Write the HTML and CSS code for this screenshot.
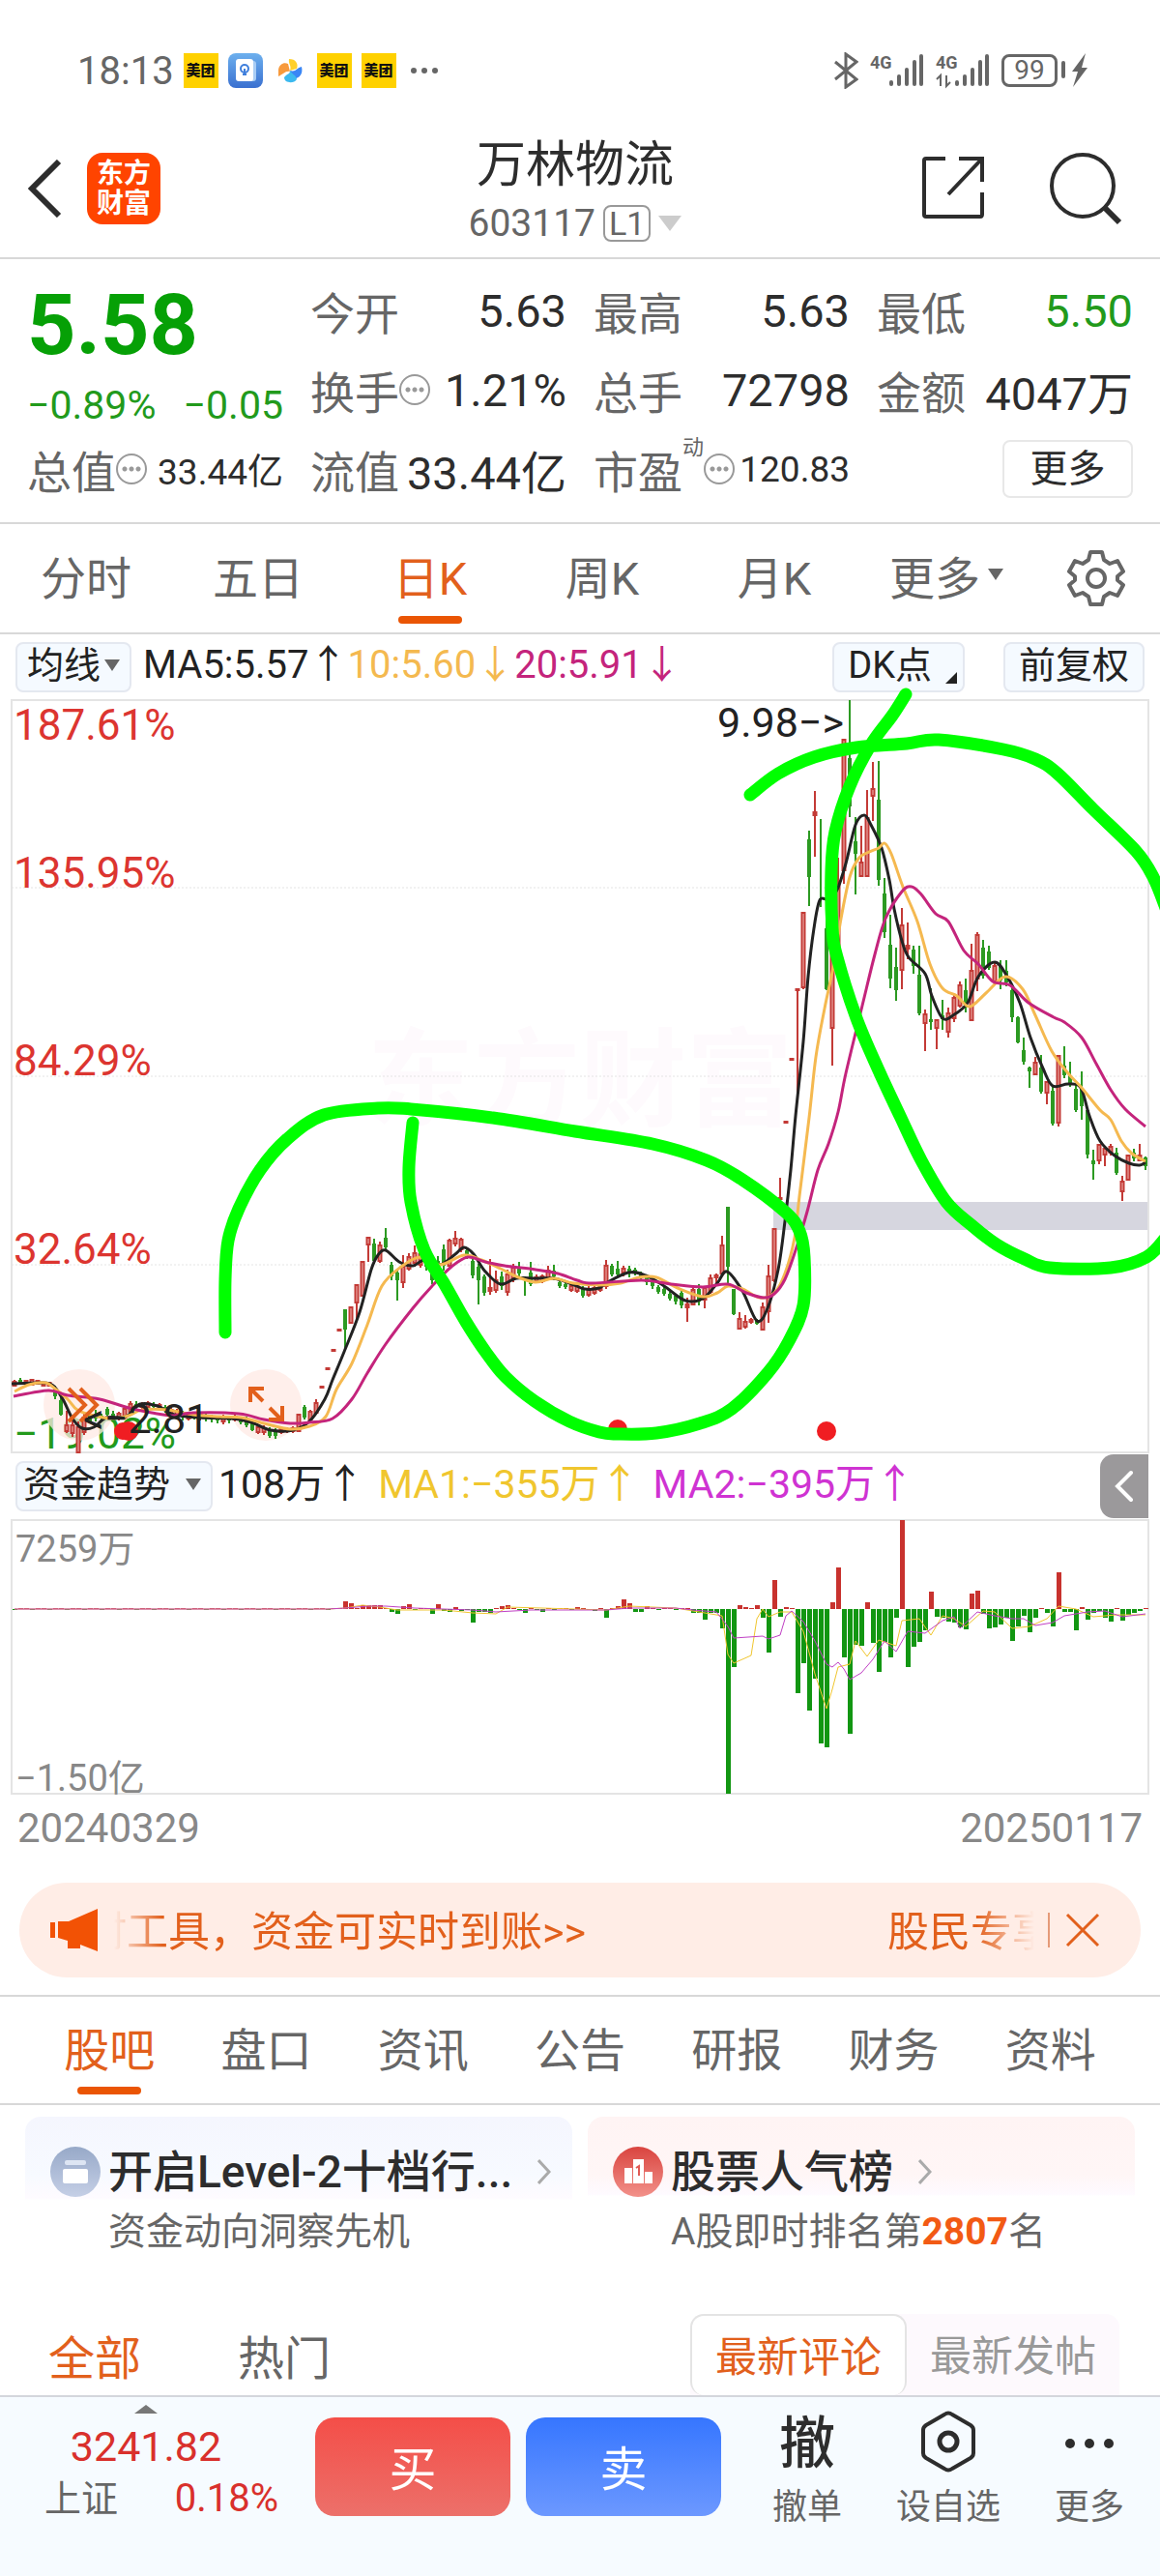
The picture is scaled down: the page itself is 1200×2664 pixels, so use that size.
FILE: index.html
```html
<!DOCTYPE html>
<html lang="zh-CN">
<head>
<meta charset="utf-8">
<meta name="viewport" content="width=device-width, initial-scale=1">
<title>万林物流 603117</title>
<link rel="stylesheet" href="styles.css">
</head>
<body>
<div class="page">

<div class="status">
  <div class="status-left">
    <span class="clock">18:13</span>
    <span class="app-mt">美团</span>
    <svg class="app-icon" viewBox="0 0 36 36"><defs><linearGradient id="doc" x2="0" y2="1"><stop stop-color="#6db0ee"/><stop offset="1" stop-color="#3a70d0"/></linearGradient></defs><rect width="36" height="36" rx="8" fill="url(#doc)"/><rect x="12" y="8" width="17" height="21" rx="3" fill="#a9cdf5"/><rect x="8" y="6" width="18" height="23" rx="3" fill="#fff"/><circle cx="17" cy="16" r="4" fill="none" stroke="#3f7fdc" stroke-width="2"/><path d="M15 22h4M17 16v6" stroke="#3f7fdc" stroke-width="2"/></svg>
    <svg class="app-icon" viewBox="0 0 36 36"><path d="M17 6c7 0 10 5 8 10l-7 2c2-5-2-7-1-12z" fill="#ffd02c"/><path d="M6 17c1-6 6-8 10-6l2 8c-5-1-7 3-12 5z" fill="#f79a3c"/><path d="M30 14c2 8-3 13-9 12l-3-8c6 2 7-3 12-4z" fill="#3a86f5"/><path d="M12 25c3-4 6-3 6-7 3 5 6 4 7 9-3 5-13 4-13-2z" fill="#3cb9ef"/></svg>
    <span class="app-mt">美团</span>
    <span class="app-mt">美团</span>
    <svg class="dots" viewBox="0 0 30 8" fill="#666"><circle cx="4" cy="4" r="3"/><circle cx="15" cy="4" r="3"/><circle cx="26" cy="4" r="3"/></svg>
  </div>
  <div class="status-right">
    <svg class="bt" viewBox="0 0 26 38" fill="none" stroke="#666" stroke-width="3"><path d="M2 10l22 18-11 8V2l11 8L2 28"/></svg>
    <svg class="signal" viewBox="0 0 56 38"><g fill="#666"><rect x="20" y="29" width="4" height="6" rx="2"/><rect x="28" y="23" width="4" height="12" rx="2"/><rect x="36" y="16" width="4" height="19" rx="2"/><rect x="44" y="8" width="4" height="27" rx="2"/><rect x="51" y="2" width="4" height="33" rx="2"/></g><text x="0" y="17" class="net">4G</text></svg>
    <svg class="signal" viewBox="0 0 56 38"><g fill="#666"><rect x="20" y="29" width="4" height="6" rx="2"/><rect x="28" y="23" width="4" height="12" rx="2"/><rect x="36" y="16" width="4" height="19" rx="2"/><rect x="44" y="8" width="4" height="27" rx="2"/><rect x="51" y="2" width="4" height="33" rx="2"/></g><text x="0" y="17" class="net">4G</text><path d="M1 28l4-4v11M15 31l-4 4V24" fill="none" stroke="#666" stroke-width="2"/></svg>
    <span class="battery">99</span>
    <svg class="bolt" viewBox="0 0 28 38"><rect x="0" y="9" width="4" height="18" rx="2" fill="#666"/><path d="M25 1L11 20h6l-5 16 15-20h-6z" fill="#666"/></svg>
  </div>
</div>

<header class="header">
  <div class="header-side">
    <button class="icon-btn" aria-label="返回"><svg class="back" viewBox="0 0 36 60" fill="none" stroke="#2d2d2d" stroke-width="6"><path d="M33 2L5 30l28 28"/></svg></button>
    <a class="logo" href="#">东方<br>财富</a>
  </div>
  <div class="header-title">
    <h1>万林物流</h1>
    <button class="code">603117<span class="level">L1</span><span class="tri tri-light"></span></button>
  </div>
  <div class="header-side header-end">
    <button class="icon-btn" aria-label="分享"><svg class="share" viewBox="0 0 70 70" fill="none" stroke="#2d2d2d" stroke-width="4"><path d="M26 4H6q-2 0-2 2v56q0 2 2 2h56q2 0 2-2V39"/><path d="M40 4h24v24M64 4L29 41"/></svg></button>
    <button class="icon-btn" aria-label="搜索"><svg class="search" viewBox="0 0 78 78" fill="none" stroke="#2d2d2d" stroke-width="4"><circle cx="36" cy="36" r="32"/><path d="M59 59l15 15" stroke-width="6"/></svg></button>
  </div>
</header>

<section class="quote">
  <div class="price">
    <strong>5.58</strong>
    <div class="change"><span>−0.89%</span><span>−0.05</span></div>
  </div>
  <div class="cell"><span>今开</span><b>5.63</b></div>
  <div class="cell"><span>最高</span><b>5.63</b></div>
  <div class="cell"><span>最低</span><b class="down">5.50</b></div>
  <div class="cell"><span>换手<i class="tip"></i></span><b>1.21%</b></div>
  <div class="cell"><span>总手</span><b>72798</b></div>
  <div class="cell"><span>金额</span><b>4047万</b></div>
  <div class="cell"><span>总值<i class="tip"></i></span><b class="small">33.44亿</b></div>
  <div class="cell"><span>流值</span><b>33.44亿</b></div>
  <div class="cell"><span>市盈<sup>动</sup><i class="tip"></i></span><b class="small">120.83</b></div>
  <div class="cell cell-end"><button class="more-btn">更多</button></div>
</section>

<nav class="tabs period">
  <a href="#">分时</a>
  <a href="#">五日</a>
  <a href="#" class="active">日K</a>
  <a href="#">周K</a>
  <a href="#">月K</a>
  <a href="#">更多<span class="tri tri-small"></span></a>
  <button class="icon-btn" aria-label="设置"><svg class="gear" viewBox="0 0 60 60" fill="none" stroke="#666" stroke-width="4" stroke-linejoin="round"><path d="M24 3h12l2 8 6 4 8-3 6 11-6 5v4l6 5-6 11-8-3-6 4-2 8H24l-2-8-6-4-8 3-6-11 6-5v-4l-6-5 6-11 8 3 6-4z"/><circle cx="30" cy="30" r="9"/></svg></button>
</nav>

<div class="indicator">
  <button class="chip">均线<span class="tri tri-small"></span></button>
  <span>MA5:5.57↑</span>
  <span class="ma10">10:5.60↓</span>
  <span class="ma20">20:5.91↓</span>
  <button class="chip push dk">DK点<svg class="corner" viewBox="0 0 12 12"><path d="M12 0v12H0z" fill="#222"/></svg></button>
  <button class="chip">前复权</button>
</div>

<svg class="chart" viewBox="0 0 1200 778" role="img" aria-label="日K线图">
  <text x="380" y="432" class="watermark">东方财富</text>
  <g class="frame">
    <rect x="12" y="0" width="1176" height="778"/>
    <path class="grid" d="M12 194h1176M12 389h1176M12 584h1176"/>
  </g>
  <g class="axis">
    <text x="14" y="41">187.61%</text>
    <text x="14" y="194">135.95%</text>
    <text x="14" y="388">84.29%</text>
    <text x="14" y="583">32.64%</text>
    <text x="14" y="774" class="neg">−19.02%</text>
  </g>
  <rect x="800" y="519" width="387" height="29" fill="#d6d6df"/>
  <g fill="#ffe9e4" fill-opacity=".75"><circle cx="82" cy="729" r="37"/><circle cx="275" cy="729" r="37"/></g>
  <g id="candles"></g>
  <g id="averages" class="lines"></g>
  <g fill="none" stroke="#e2601c" stroke-width="4"><path d="M71 712l17 17-17 17M83 712l17 17-17 17"/><path d="M259 726v-14h14M260 713l12 12M279 732l12 12M292 730v14h-14"/></g>
  <g fill="#f01d22"><circle cx="127" cy="756" r="9"/><circle cx="133" cy="756" r="10"/><circle cx="639" cy="754" r="10"/><circle cx="855" cy="756" r="10"/></g>
  <g class="marks">
    <text x="742" y="38">9.98−&gt;</text>
    <text x="86" y="758">&lt;−2.81</text>
  </g>
  <g id="pen" class="pen"></g>
</svg>

<div class="indicator fund-head">
  <button class="chip chip-wide">资金趋势<span class="tri tri-small"></span></button>
  <span>108万↑</span>
  <span class="fund1">MA1:−355万↑</span>
  <span class="fund2">MA2:−395万↑</span>
  <button class="collapse push" aria-label="展开"><svg viewBox="0 0 20 34" fill="none" stroke="#fff" stroke-width="4" stroke-linecap="round"><path d="M17 3L3 17l14 14"/></svg></button>
</div>

<svg class="chart" viewBox="0 0 1200 284" role="img" aria-label="资金趋势图">
  <rect x="12" y="0" width="1176" height="283" class="frame"/>
  <g id="flow"></g>
  <g id="flowLines" class="thin-lines"></g>
  <g class="scale">
    <text x="16" y="43">7259万</text>
    <text x="16" y="280">−1.50亿</text>
  </g>
</svg>

<div class="dates"><time>20240329</time><time>20250117</time></div>

<div class="notice">
  <svg class="horn" viewBox="0 0 50 44" fill="#f25205"><rect x="0" y="14" width="5" height="16"/><path d="M8 13h11L49 0v44L31 37v4H18v-8L8 30z"/></svg>
  <a class="marquee" href="#"><span>时工具，资金可实时到账&gt;&gt;</span><span>股民专享</span></a>
  <button class="icon-btn close" aria-label="关闭"><svg viewBox="0 0 36 36" fill="none" stroke="#e2601c" stroke-width="3"><path d="M2 2l32 32M34 2L2 34"/></svg></button>
</div>

<nav class="tabs info">
  <a href="#" class="active">股吧</a>
  <a href="#">盘口</a>
  <a href="#">资讯</a>
  <a href="#">公告</a>
  <a href="#">研报</a>
  <a href="#">财务</a>
  <a href="#">资料</a>
</nav>

<section class="cards">
  <a class="card" href="#">
    <svg class="card-icon" viewBox="0 0 52 52"><defs><linearGradient id="blue" x2="0" y2="1"><stop stop-color="#97a9c8"/><stop offset="1" stop-color="#c5cfe6"/></linearGradient></defs><circle cx="26" cy="26" r="26" fill="url(#blue)"/><rect x="15" y="14" width="22" height="5" rx="2" fill="#dde5f3"/><rect x="13" y="23" width="26" height="15" rx="2" fill="#fff"/></svg>
    <h2>开启Level-2十档行...</h2>
    <svg class="arrow" viewBox="0 0 14 26" fill="none" stroke="#aaa" stroke-width="3"><path d="M1 1l11 12L1 25"/></svg>
    <p>资金动向洞察先机</p>
  </a>
  <a class="card card-red" href="#">
    <svg class="card-icon" viewBox="0 0 52 52"><defs><linearGradient id="red" x2="0" y2="1"><stop stop-color="#d9443f"/><stop offset="1" stop-color="#f2918a"/></linearGradient></defs><circle cx="26" cy="26" r="26" fill="url(#red)"/><path d="M12 38V22h8v16zM21 38V13h11v25zM33 38V26h8v12z" fill="#fff"/><path d="M24 22l3-2v10" fill="none" stroke="#e05a55" stroke-width="2"/></svg>
    <h2>股票人气榜</h2>
    <svg class="arrow" viewBox="0 0 14 26" fill="none" stroke="#aaa" stroke-width="3"><path d="M1 1l11 12L1 25"/></svg>
    <p>A股即时排名第<em>2807</em>名</p>
  </a>
</section>

<div class="filter">
  <a href="#" class="active">全部</a>
  <a href="#">热门</a>
  <div class="switch">
    <button class="on">最新评论</button>
    <button>最新发帖</button>
  </div>
</div>

<footer class="bottom">
  <a class="index" href="#">
    <span class="tri tri-up"></span>
    <b>3241.82</b>
    <span class="index-row"><span>上证</span><b>0.18%</b></span>
  </a>
  <button class="trade buy">买</button>
  <button class="trade sell">卖</button>
  <button class="tool"><span class="glyph">撤</span><span>撤单</span></button>
  <button class="tool"><svg viewBox="0 0 58 64" fill="none" stroke="#2d2d2d" stroke-width="4" stroke-linejoin="round"><path d="M25 4q4-3 8 0l19 11q3 2 3 5v24q0 3-3 5L33 60q-4 3-8 0L6 49q-3-2-3-5V20q0-3 3-5z"/><circle cx="29" cy="32" r="9" stroke-width="5"/></svg><span>设自选</span></button>
  <button class="tool"><svg viewBox="0 0 58 64" fill="#2d2d2d"><circle cx="9" cy="34" r="5"/><circle cx="29" cy="34" r="5"/><circle cx="49" cy="34" r="5"/></svg><span>更多</span></button>
</footer>

</div>
<script src="chart.js"></script>
</body>
</html>
```

FILE: styles.css
```css
* {
  box-sizing: border-box;
}
body {
  margin: 0;
  background: #fff;
  color: #2d2d2d;
  font-family: Roboto, "Noto Sans CJK SC", sans-serif;
  font-size: 40px;
}
a {
  color: inherit;
  text-decoration: none;
}
button {
  margin: 0;
  padding: 0;
  border: 0;
  background: none;
  color: inherit;
  font: inherit;
}
svg {
  display: block;
}
h1, h2, p {
  margin: 0;
  font-weight: 400;
}
b, i, em {
  font-style: normal;
  font-weight: 400;
}
.page {
  overflow: hidden;
}
.icon-btn {
  display: flex;
  align-items: center;
  justify-content: center;
}
.tri {
  display: inline-block;
  border: 12px solid transparent;
  border-top: 16px solid #666;
  border-bottom: 0;
}
.tri-light {
  border-top-color: #ccc;
}
.tri-small {
  border-width: 12px 8px 0;
}
.tri-up {
  border-width: 0 12px 9px;
  border-bottom: 9px solid #777;
}

/* status bar */
.status {
  display: flex;
  align-items: center;
  justify-content: space-between;
  height: 128px;
  padding: 18px 74px 0 80px;
  color: #666;
}
.status-left, .status-right {
  display: flex;
  align-items: center;
  gap: 10px;
}
.status-right {
  gap: 12px;
}
.app-mt {
  width: 36px;
  height: 36px;
  background: #ffd100;
  color: #111;
  font-size: 15px;
  font-weight: 900;
  line-height: 36px;
  text-align: center;
}
.app-icon {
  width: 36px;
  height: 36px;
}
.dots {
  width: 30px;
  margin-left: 4px;
}
.bt {
  width: 26px;
  height: 38px;
}
.signal {
  width: 56px;
  height: 38px;
}
.net {
  fill: #666;
  font-size: 18px;
  font-weight: 700;
}
.battery {
  width: 58px;
  height: 34px;
  border: 3px solid #666;
  border-radius: 8px;
  font-size: 28px;
  line-height: 28px;
  text-align: center;
}
.bolt {
  width: 28px;
  height: 38px;
  margin-left: -8px;
}

/* title */
.header {
  display: grid;
  grid-template-columns: 1fr auto 1fr;
  align-items: center;
  height: 140px;
  padding: 0 38px 8px 28px;
  border-bottom: 2px solid #d8d8d8;
}
.header-side {
  display: flex;
  align-items: center;
  gap: 26px;
  padding-top: 4px;
}
.header-end {
  justify-content: flex-end;
  gap: 62px;
}
.header-title {
  padding-top: 4px;
  text-align: center;
}
.header h1 {
  font-size: 51px;
  line-height: 72px;
}
.code {
  display: flex;
  align-items: center;
  justify-content: center;
  gap: 8px;
  color: #666;
  font-size: 39px;
  line-height: 48px;
}
.level {
  padding: 0 4px;
  border: 2px solid #999;
  border-radius: 8px;
  font-size: 34px;
  line-height: 34px;
}
.back {
  width: 36px;
  height: 60px;
}
.logo {
  width: 76px;
  height: 74px;
  padding-top: 6px;
  border-radius: 16px;
  background: #ff4400;
  color: #fff;
  font-size: 28px;
  font-weight: 700;
  line-height: 31px;
  text-align: center;
}
.share {
  width: 70px;
  height: 70px;
}
.search {
  width: 78px;
  height: 78px;
}

/* quote */
.quote {
  display: grid;
  grid-template-columns: repeat(4, 1fr);
  grid-auto-rows: 82px;
  column-gap: 28px;
  padding: 12px 28px 14px;
  border-bottom: 2px solid #d8d8d8;
}
.price {
  grid-row: span 2;
  color: #06a006;
}
.price strong {
  display: block;
  font-size: 88px;
  line-height: 112px;
}
.change {
  display: flex;
  justify-content: space-between;
  color: #229a1c;
  font-size: 41px;
  line-height: 54px;
}
.cell {
  display: flex;
  align-items: center;
  justify-content: space-between;
  font-size: 47px;
  white-space: nowrap;
}
.cell span {
  display: flex;
  align-items: center;
  color: #666;
  font-size: 46px;
}
.cell b.small {
  font-size: 37px;
}
.cell b.down {
  color: #229a1c;
}
.cell sup {
  align-self: flex-start;
  font-size: 22px;
  line-height: 22px;
}
.cell-end {
  justify-content: flex-end;
}
.tip {
  width: 32px;
  height: 32px;
  border: 2px solid #999;
  border-radius: 50%;
  background:
    radial-gradient(circle at 7px 14px, #999 2px, transparent 3px),
    radial-gradient(circle at 14px 14px, #999 2px, transparent 3px),
    radial-gradient(circle at 21px 14px, #999 2px, transparent 3px);
}
.more-btn {
  width: 135px;
  height: 60px;
  border: 2px solid #e8e8e8;
  border-radius: 8px;
  font-size: 39px;
  line-height: 54px;
}

/* tabs */
.tabs {
  display: grid;
  height: 114px;
  border-bottom: 2px solid #d8d8d8;
  color: #666;
  font-size: 47px;
}
.period {
  grid-template-columns: repeat(6, 1fr) 132px;
}
.info {
  grid-template-columns: repeat(7, 1fr);
  padding: 0 32px;
}
.tabs a {
  position: relative;
  display: flex;
  align-items: center;
  justify-content: center;
  gap: 8px;
  padding-bottom: 8px;
}
.tabs .active, .filter .active {
  color: #e2601c;
}
.tabs .active::after {
  content: "";
  position: absolute;
  bottom: 9px;
  width: 66px;
  height: 8px;
  border-radius: 4px;
  background: #ea5504;
}
.gear {
  width: 60px;
  height: 60px;
}

/* indicator rows */
.indicator {
  display: flex;
  align-items: center;
  height: 68px;
  padding: 0 16px;
  color: #222;
  line-height: 52px;
  white-space: nowrap;
}
.indicator > span {
  padding-bottom: 4px;
}
.indicator .ma10 {
  color: #f4b94f;
}
.indicator .ma20 {
  color: #c4247c;
}
.fund-head > span {
  margin-right: 14px;
  font-size: 41px;
}
.indicator .fund1 {
  color: #f0c62e;
}
.indicator .fund2 {
  color: #cf33d2;
}
.chip {
  display: flex;
  align-items: center;
  gap: 4px;
  height: 52px;
  margin-right: 12px;
  padding: 0 10px 4px;
  border: 2px solid #e4e8f0;
  border-radius: 8px;
  background: #f5faff;
  font-size: 38px;
}
.chip:last-child {
  margin-right: 0;
  padding: 0 14px 4px;
}
.push {
  margin-left: auto;
}
.dk {
  gap: 14px;
  margin-right: 40px;
  padding: 0 6px 4px 14px;
}
.corner {
  width: 12px;
  height: 12px;
  margin-top: 26px;
}
.chip-wide {
  gap: 16px;
  margin-right: 6px;
  padding-left: 6px;
}
.fund-head {
  height: 70px;
  padding-right: 12px;
}
.collapse {
  display: flex;
  align-items: center;
  justify-content: center;
  width: 50px;
  height: 66px;
  border-radius: 14px 0 0 14px;
  background: #9b999b;
}
.collapse svg {
  width: 20px;
  height: 34px;
}

/* charts */
.chart {
  width: 100%;
  height: auto;
  overflow: visible;
}
.frame {
  fill: none;
  stroke: #e4e4e4;
  stroke-width: 2;
}
.grid {
  stroke-dasharray: 2 2;
  stroke-width: 1;
}
.watermark {
  fill: #fefafd;
  font-size: 110px;
  font-weight: 700;
}
.axis {
  fill: #dc3530;
  font-size: 44px;
}
.axis .neg {
  fill: #229a1c;
}
.marks {
  fill: #222;
  font-size: 43px;
}
.scale {
  fill: #888;
  font-size: 38px;
}
.lines {
  fill: none;
  stroke-width: 3;
}
.thin-lines {
  fill: none;
  stroke-width: 1;
}
.pen {
  fill: none;
  stroke: #00ff00;
  stroke-width: 13;
  stroke-linecap: round;
  stroke-linejoin: round;
}
.dates {
  display: flex;
  justify-content: space-between;
  padding: 8px 18px 30px;
  color: #888;
  font-size: 42px;
  line-height: 53px;
}

/* notice */
.notice {
  display: flex;
  align-items: center;
  height: 98px;
  margin: 0 20px 18px;
  padding: 0 42px 0 32px;
  border-radius: 49px;
  background: #ffede6;
  color: #e2601c;
  font-size: 43px;
}
.horn {
  width: 50px;
  height: 44px;
}
.marquee {
  display: flex;
  flex: 1;
  justify-content: space-between;
  min-width: 0;
  margin: 0 14px 0 16px;
  padding-bottom: 4px;
  overflow: hidden;
  white-space: nowrap;
  -webkit-mask: linear-gradient(to right, transparent, #000 50px, #000 calc(100% - 60px), transparent);
  mask: linear-gradient(to right, transparent, #000 50px, #000 calc(100% - 60px), transparent);
}
.marquee span:first-child {
  margin-left: -30px;
}
.marquee span:last-child {
  margin-right: -20px;
}
.close {
  padding-left: 16px;
  border-left: 2px solid #e59a78;
}
.close svg {
  width: 36px;
  height: 36px;
}
.info {
  border-top: 2px solid #d8d8d8;
}

/* cards */
.cards {
  display: grid;
  grid-template-columns: 1fr 1fr;
  gap: 16px;
  padding: 12px 26px 0;
}
.card {
  display: grid;
  grid-template-columns: 52px auto 1fr;
  column-gap: 8px;
  align-items: center;
  padding: 24px 18px 0 26px;
  border-radius: 16px 16px 0 0;
  background: linear-gradient(#f5f6fe, #f7faff 60px, #fefbff 84px, #fff 86px);
}
.card-red {
  background: linear-gradient(#fff4f4, #fff6f6 60px, #fefaff 80px, #fff 82px);
}
.card-icon {
  width: 52px;
  height: 52px;
}
.card h2 {
  font-size: 46px;
  font-weight: 500;
  line-height: 66px;
  white-space: nowrap;
}
.arrow {
  width: 14px;
  height: 26px;
  margin-left: 18px;
}
.card p {
  grid-column: 2 / 4;
  color: #666;
  font-size: 39px;
  line-height: 58px;
}
.card em {
  color: #f25a14;
  font-weight: 700;
}

/* filter */
.filter {
  display: flex;
  align-items: center;
  gap: 100px;
  height: 84px;
  margin-top: 56px;
  padding: 0 42px 0 50px;
  color: #666;
  font-size: 48px;
}
.switch {
  display: flex;
  height: 84px;
  margin-left: auto;
  border-radius: 14px 14px 0 0;
  background: #fdf9fd;
  color: #999;
  font-size: 43px;
}
.switch button {
  padding: 0 24px 4px;
}
.switch .on {
  border: 2px solid #e4e4e4;
  border-bottom: 0;
  border-radius: 14px;
  background: #fff;
  color: #e2601c;
}

/* bottom bar */
.bottom {
  display: flex;
  align-items: flex-start;
  padding: 8px 0 62px 46px;
  border-top: 2px solid #d4d6dc;
  background: #f6fbff;
}
.index {
  display: flex;
  flex-direction: column;
  align-items: center;
  width: 210px;
  margin-right: 70px;
}
.index b {
  color: #d9302c;
  font-size: 43px;
  line-height: 68px;
}
.index-row {
  display: flex;
  align-items: center;
  align-self: flex-start;
  justify-content: space-between;
  width: 242px;
  color: #666;
  font-size: 38px;
  line-height: 40px;
}
.index-row b {
  font-size: 40px;
  line-height: 40px;
}
.trade {
  flex: 1;
  height: 102px;
  margin: 13px 16px 0 0;
  padding-bottom: 4px;
  border-radius: 20px;
  color: #fff;
  font-size: 49px;
}
.buy {
  background: linear-gradient(#f44e48, #ec706a);
}
.sell {
  background: linear-gradient(#3676ff, #6c98ff);
}
.tool {
  display: flex;
  flex-direction: column;
  align-items: center;
  width: 146px;
  color: #666;
  font-size: 36px;
  line-height: 52px;
}
.tool svg {
  width: 58px;
  height: 64px;
  margin: 6px 0;
}
.tool span:last-child {
  padding-top: 4px;
}
.glyph {
  height: 76px;
  color: #2d2d2d;
  font-size: 58px;
  font-weight: 500;
  line-height: 80px;
}
```

FILE: chart.js
```js
var SVG = 'http://www.w3.org/2000/svg';
var STEP = 6;
var RED = '#c33a36';
var GREEN = '#2c9a22';

function add(parent, name, attrs) {
  var el = document.createElementNS(SVG, name);
  for (var key in attrs) {
    el.setAttribute(key, attrs[key]);
  }
  document.getElementById(parent).appendChild(el);
}

function xOf(i) {
  return 15 + STEP * i;
}

// Curve through all the points of a flat x, y list.
function smooth(list) {
  var p = [];
  for (var i = 0; i < list.length; i += 2) {
    p.push([list[i], list[i + 1]]);
  }
  var d = 'M' + p[0];
  for (i = 0; i < p.length - 1; i++) {
    var a = p[i - 1] || p[i], b = p[i], c = p[i + 1], e = p[i + 2] || c;
    d += 'C' + [b[0] + (c[0] - a[0]) / 6, b[1] + (c[1] - a[1]) / 6,
                c[0] - (e[0] - b[0]) / 6, c[1] - (e[1] - b[1]) / 6, c[0], c[1]];
  }
  return d;
}

// index, colour, high, body top, body bottom, low
var candles = [
  [0,'r',703,705,709,710],[1,'g',701,703,707,708],[2,'r',703,704,707,708],[3,'r',702,703,708,709],[4,'r',703,704,707,708],[5,'r',705,706,709,710],
  [6,'r',705,706,709,710],[7,'g',709,712,720,723],[8,'g',718,724,739,740],[9,'r',735,750,756,758],[10,'r',744,750,758,762],[11,'r',746,752,778,778],
  [12,'r',738,742,757,760],[13,'g',737,740,746,748],[14,'g',734,738,743,746],[15,'g',738,740,743,745],[16,'g',731,733,739,740],[17,'g',735,738,742,744],
  [18,'r',736,738,743,745],[19,'r',730,733,742,744],[20,'r',725,728,736,738],[21,'g',725,728,731,734],[22,'r',726,728,731,734],[23,'r',725,727,731,733],
  [24,'g',726,728,731,734],[25,'r',727,729,733,735],[26,'g',729,731,735,737],[27,'r',731,734,738,741],[28,'r',733,736,742,744],[29,'g',735,737,742,745],
  [30,'r',737,739,743,745],[31,'g',738,740,743,744],[32,'r',736,739,742,745],[33,'g',738,740,743,746],[34,'g',739,741,744,747],[35,'g',741,743,745,748],
  [36,'r',739,742,746,749],[37,'g',741,742,745,748],[38,'r',738,741,744,746],[39,'g',742,743,747,749],[40,'g',741,744,750,752],[41,'g',746,748,755,756],
  [42,'r',749,752,757,759],[43,'r',750,753,757,760],[44,'g',752,755,761,763],[45,'g',753,757,761,764],[46,'r',752,754,757,759],[47,'r',752,754,756,758],
  [48,'r',751,753,756,758],[49,'r',738,739,756,757],[50,'g',729,731,742,744],[51,'r',734,736,744,745],[52,'r',723,727,737,739],[53,'r',710,710,711,711],
  [54,'r',691,691,692,692],[55,'r',672,672,673,673],[56,'r',651,651,652,652],[57,'g',630,630,651,673],[58,'r',628,628,644,645],[59,'r',605,605,623,641],
  [60,'r',581,581,616,617],[61,'r',556,556,563,581],[62,'g',557,562,580,583],[63,'r',560,564,580,582],[64,'g',546,556,566,568],[65,'g',581,584,596,600],
  [66,'g',588,592,600,621],[67,'r',574,586,602,608],[68,'r',572,576,588,590],[69,'r',564,572,582,586],[70,'r',568,573,584,587],[71,'g',570,575,586,590],
  [72,'g',576,582,600,604],[73,'g',575,580,590,594],[74,'g',563,568,585,590],[75,'r',557,559,585,588],[76,'r',549,557,562,565],[77,'r',556,558,568,571],
  [78,'g',566,569,576,578],[79,'g',576,580,595,598],[80,'g',583,586,600,625],[81,'g',594,596,613,616],[82,'r',578,608,611,615],[83,'r',590,600,610,613],
  [84,'g',591,596,606,610],[85,'r',589,594,612,616],[86,'r',583,587,598,602],[87,'g',581,588,593,596],[88,'g',596,598,600,616],[89,'g',581,592,604,606],
  [90,'r',594,597,601,603],[91,'r',594,596,601,603],[92,'r',585,590,598,600],[93,'g',584,590,596,600],[94,'g',599,602,606,608],[95,'g',602,604,607,609],
  [96,'r',604,606,610,612],[97,'r',603,606,611,613],[98,'g',606,608,616,618],[99,'r',606,610,615,617],[100,'r',604,608,613,615],[101,'r',602,605,610,612],
  [102,'r',579,585,606,609],[103,'g',583,585,594,596],[104,'g',580,588,594,597],[105,'r',585,588,592,596],[106,'g',585,588,593,597],[107,'g',587,589,592,595],
  [108,'g',591,593,596,599],[109,'g',595,597,602,605],[110,'g',599,602,606,609],[111,'g',605,607,612,614],[112,'g',607,609,614,616],[113,'g',612,614,619,621],
  [114,'g',614,616,622,625],[115,'g',611,613,626,629],[116,'r',618,625,628,643],[117,'r',606,610,625,626],[118,'g',604,609,622,626],[119,'r',606,608,620,629],
  [120,'r',594,598,612,614],[121,'r',593,595,597,603],[122,'r',554,564,593,594],[123,'g',524,524,586,606],[124,'g',609,609,635,636],[125,'r',633,640,650,651],
  [126,'r',636,643,648,650],[127,'r',639,641,643,645],[128,'g',640,641,645,646],[129,'r',623,628,651,652],[130,'r',584,596,632,644],[131,'r',547,547,600,602],
  [132,'r',494,515,516,516],[133,'r',436,436,437,437],[134,'r',371,371,372,372],[135,'r',299,299,300,412],[136,'r',220,220,297,299],[137,'g',135,144,183,213],
  [138,'r',94,116,119,162],[139,'g',123,205,206,214],[140,'g',217,236,299,300],[141,'r',220,262,339,378],[142,'r',163,190,280,287],[143,'r',40,41,176,190],
  [144,'g',0,60,110,121],[145,'g',121,146,159,201],[146,'r',130,168,182,183],[147,'r',93,122,182,183],[148,'r',64,92,99,125],[149,'g',63,103,186,192],
  [150,'g',184,200,240,246],[151,'g',222,253,288,298],[152,'g',256,276,300,311],[153,'r',215,233,279,299],[154,'r',230,254,257,268],[155,'g',254,258,275,283],
  [156,'g',254,284,324,326],[157,'r',320,325,334,363],[158,'g',298,330,333,341],[159,'r',330,331,339,361],[160,'g',310,326,330,341],[161,'r',318,324,343,349],
  [162,'r',304,308,329,333],[163,'r',291,295,316,318],[164,'g',288,300,318,323],[165,'r',252,280,331,332],[166,'r',240,243,288,301],[167,'g',248,256,285,288],
  [168,'g',254,260,277,279],[169,'r',271,275,291,295],[170,'g',269,275,290,299],[171,'g',269,280,292,296],[172,'g',296,300,328,333],[173,'g',327,328,354,355],
  [174,'g',349,362,374,377],[175,'g',379,380,384,401],[176,'r',369,375,387,388],[177,'g',367,380,405,407],[178,'r',394,395,406,418],[179,'g',398,404,438,440],
  [180,'r',367,368,437,441],[181,'g',358,378,388,391],[182,'g',374,388,398,400],[183,'g',397,402,424,426],[184,'g',384,402,420,434],[185,'g',423,424,470,474],
  [186,'g',465,476,480,496],[187,'r',459,460,476,480],[188,'r',461,464,470,482],[189,'r',459,462,468,471],[190,'g',463,468,489,491],[191,'r',492,498,508,518],
  [192,'r',470,471,496,497],[193,'g',464,468,474,477],[194,'r',459,471,476,477],[195,'g',472,473,482,486]
];

candles.forEach(function (c) {
  var x = xOf(c[0]);
  if (c[1] == 'g') {
    add('candles', 'path', {d: 'M' + x + ' ' + c[2] + 'V' + c[5], stroke: GREEN, 'stroke-width': 2});
    add('candles', 'rect', {x: x - 2, y: c[3], width: 4, height: c[4] - c[3], fill: GREEN});
  } else {
    add('candles', 'path', {d: 'M' + x + ' ' + c[2] + 'V' + c[3] + 'M' + x + ' ' + c[4] + 'V' + c[5], stroke: RED, 'stroke-width': 2});
    add('candles', 'rect', {x: x - 1.5, y: c[3], width: 3, height: c[4] - c[3], fill: c[4] - c[3] > 3 ? '#f0b8b4' : RED, stroke: RED, 'stroke-width': 2});
  }
});

var averages = {
  '#222': [12,707,43,706,55,709,65,723,75,743,85,753,97,752,110,742,130,741,145,728,163,730,180,739,207,742,240,743,260,747,280,755,303,755,320,746,336,723,344,703,356,674,372,633,384,589,391,574,399,569,413,581,427,585,439,579,455,584,471,573,480,566,490,573,502,591,518,604,534,598,554,598,573,598,589,603,605,609,620,608,627,603,650,592,668,595,687,606,709,621,727,619,742,603,752,591,768,611,783,642,794,629,805,589,812,539,818,486,823,430,831,353,836,286,842,236,848,207,857,206,866,196,875,169,885,129,894,119,901,129,912,153,920,186,925,216,933,249,940,266,957,283,964,306,975,329,986,326,1001,313,1012,286,1029,271,1042,286,1055,313,1066,349,1079,381,1089,399,1105,397,1118,401,1127,430,1138,456,1153,471,1168,479,1179,481,1185,478],
  '#f5b950': [15,715,30,708,47,706,58,713,70,723,80,734,97,740,117,743,133,740,147,734,173,734,200,739,227,741,250,742,277,749,300,754,320,751,337,741,348,713,364,686,380,646,395,606,415,586,435,576,455,584,480,574,498,579,518,588,534,596,554,602,573,598,593,603,620,605,642,603,661,597,679,597,701,608,727,617,742,613,753,606,768,609,786,618,801,613,812,593,822,556,827,513,837,432,844,369,853,319,862,276,870,226,879,183,888,164,897,158,909,153,915,148,922,159,934,193,949,229,962,273,975,298,990,306,1003,317,1020,303,1040,286,1058,299,1071,326,1088,363,1105,386,1119,401,1138,424,1149,434,1160,456,1171,469,1185,477],
  '#c4247c': [14,720,50,714,70,719,103,723,133,732,157,737,180,740,200,737,247,738,273,744,300,748,320,747,344,743,364,723,380,696,399,666,427,629,447,606,467,586,484,576,502,581,522,585,554,589,577,593,597,600,613,603,664,600,694,604,727,607,753,604,772,613,790,618,801,614,812,599,823,569,835,529,846,486,857,459,867,426,875,386,892,316,905,263,916,226,933,198,943,193,953,201,968,221,981,229,997,259,1012,273,1027,291,1045,295,1064,313,1090,328,1101,333,1119,349,1134,376,1149,403,1164,423,1185,441]
};
for (var color in averages) {
  add('averages', 'path', {d: smooth(averages[color]), stroke: color});
}

// Hand-drawn circles round the two tops.
[
  [233,654,233,599,236,559,247,526,269,486,297,454,335,429,391,422,425,423,510,432,595,446,675,459,731,476,768,496,812,529,827,549,832,576,831,626,816,663,794,696,757,733,724,748,679,758,638,759,620,757,589,746,553,725,523,700,503,675,482,643,461,606,439,569,425,519,423,483,427,437],
  [937,-6,923,16,901,46,879,89,864,136,860,176,861,236,866,266,886,329,909,383,931,430,953,476,979,519,1005,543,1031,563,1060,578,1086,587,1149,587,1186,576,1206,556],
  [776,98,805,76,842,59,886,49,938,45,971,41,1038,51,1071,61,1094,76,1131,113,1175,156,1193,183,1206,215]
].forEach(function (stroke) {
  add('pen', 'path', {d: smooth(stroke)});
});

// Net inflow by day index; days that are not listed are close to zero.
var ZERO = 92;
var flow = {
  57:8,58:6,60:4,61:4,62:4,63:4,65:-3,66:-5,67:3,68:5,72:-5,73:5,74:-2,75:-3,76:2,77:-2,79:-14,80:-3,81:-3,82:-4,84:3,85:4,88:-4,91:-3,97:2,100:-2,
  102:-9,104:3,105:10,106:6,107:-3,108:-3,109:3,117:-4,118:-4,119:-11,120:-4,121:-4,122:-20,123:-191,124:-60,125:4,126:2,127:1,128:4,129:-9,130:-45,
  131:30,132:-8,133:2,134:1,135:-87,136:-56,137:-105,138:-72,139:-139,140:-143,141:7,142:43,143:-50,144:-129,145:-37,146:-38,147:7,148:-35,149:-65,
  150:-34,151:-50,152:-9,153:92,154:-60,155:-39,156:-34,157:-22,158:18,159:-8,160:-9,161:-13,162:-14,163:-19,164:-21,165:16,166:19,167:-5,168:-20,
  169:-19,170:-16,171:-9,172:-33,173:-18,174:-7,175:-24,176:-9,177:1,178:-4,179:-18,180:38,181:-3,182:-3,183:-22,184:2,185:-11,186:-4,187:-2,188:-9,
  189:-13,190:1,191:-12,192:-6,193:-4,194:-2,195:1
};
for (var i = 0; i < 196; i++) {
  var v = flow[i] || (i % 3 ? 1 : -1);
  add('flow', 'rect', {x: xOf(i) - 2, y: v > 0 ? ZERO - v : ZERO, width: 5, height: Math.abs(v), fill: v > 0 ? '#c8322e' : '#129612'});
}

var flowLines = {
  '#f0c62e': [0,0,54,0,57,1,60,4,63,2,66,-1,74,-1,79,-4,83,-5,85,2,91,1,102,-1,106,3,110,2,114,1,119,-4,122,-7,123,-47,124,-56,127,-48,128,-10,129,0,130,-8,132,-3,134,-3,136,-23,138,-67,140,-103,141,-83,142,-60,144,-57,145,-33,147,-49,149,-32,152,-38,153,-12,156,-10,158,-27,160,-7,162,-10,164,-18,167,-2,169,-3,172,-20,175,-18,178,-10,180,3,183,0,186,-8,190,-6,195,-6],
  '#c040c4': [0,0,54,0,57,1,61,3,64,3,69,1,74,0,79,-1,83,-3,89,-1,102,-1,106,1,114,1,117,-1,121,-3,123,-18,124,-30,129,-28,130,-31,132,-27,133,-7,134,-2,136,-13,138,-33,140,-57,141,-60,142,-55,143,-62,144,-73,146,-66,148,-52,150,-33,152,-44,154,-23,157,-25,160,-12,162,-8,163,-20,166,-3,169,-7,172,-10,174,-10,176,-17,179,-14,181,-7,185,-3,188,-2,191,-8,195,-5]
};
for (color in flowLines) {
  var line = flowLines[color], points = [];
  for (i = 0; i < line.length; i += 2) {
    points.push(xOf(line[i]) + ',' + (ZERO - line[i + 1]));
  }
  add('flowLines', 'polyline', {points: points.join(' '), stroke: color});
}
```
